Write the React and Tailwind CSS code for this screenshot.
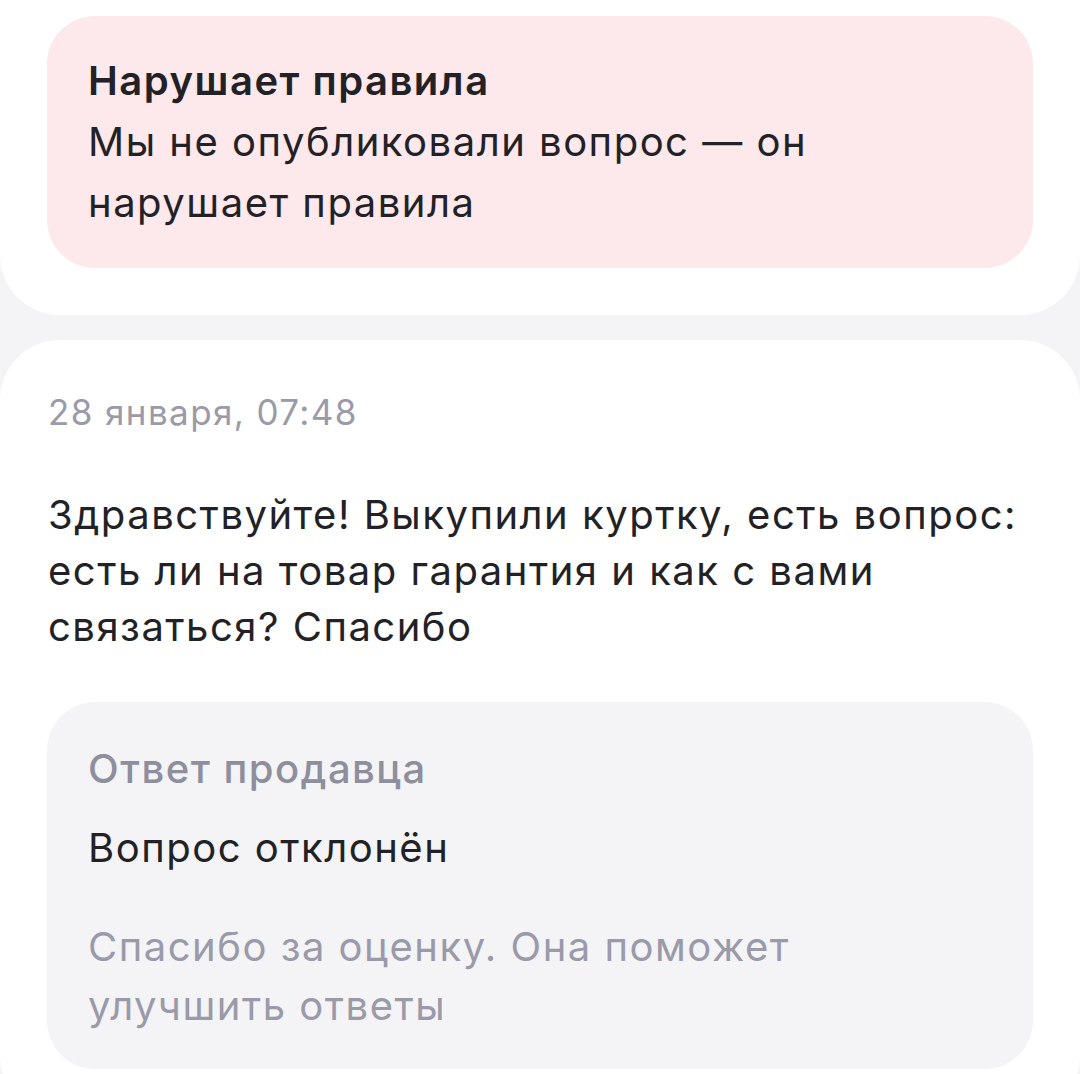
export default function App() {
  return (
    <div className="min-h-[1074px] bg-[#f4f4f7] overflow-hidden" style={{ fontFamily: "Inter, 'Noto Sans', sans-serif" }}>
      <div className="bg-white rounded-b-[60px] pt-[16px] px-[47px] pb-[47px]">
        <div className="bg-[#fde8ec] rounded-[48px] pl-[41px] pr-[30px] pt-[34px] pb-[35px] text-[#222226] tracking-[1.5px]">
          <div className="text-[40px] leading-[61px] font-semibold">Нарушает правила</div>
          <div className="text-[40px] leading-[61px] font-normal max-w-[780px]">Мы не опубликовали вопрос — он нарушает правила</div>
        </div>
      </div>
      <div className="mt-[25px] bg-white rounded-[60px] px-[47px] pt-[52px] pb-[47px]">
        <div className="text-[35px] leading-[40px] text-[#9a9aa8] tracking-[1.4px] pl-[1px]">28 января, 07:48</div>
        <div className="mt-[55px] text-[40px] leading-[56px] text-[#222226] tracking-[1.5px] pl-[1px]">
          Здравствуйте! Выкупили куртку, есть вопрос: есть ли на товар гарантия и как с вами связаться? Спасибо
        </div>
        <div className="mt-[47px] bg-[#f4f4f7] rounded-[48px] pl-[41px] pr-[30px] pt-[43px] pb-[34px] tracking-[1.5px]">
          <div className="text-[40px] leading-[48px] font-medium text-[#8e8e9c]">Ответ продавца</div>
          <div className="mt-[28px] text-[40px] leading-[54px] text-[#222226]">Вопрос отклонён</div>
          <div className="mt-[42px] text-[40px] leading-[59px] text-[#9a9aa8] max-w-[760px]">Спасибо за оценку. Она поможет улучшить ответы</div>
        </div>
      </div>
    </div>
  );
}
